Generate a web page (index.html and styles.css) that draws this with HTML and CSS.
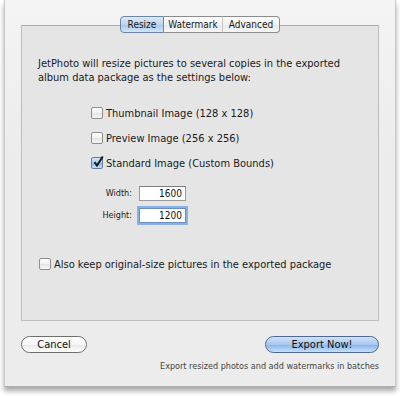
FILE: index.html
```html
<!DOCTYPE html>
<html>
<head>
<meta charset="utf-8">
<link rel="stylesheet" href="styles.css">
</head>
<body>
<div class="window">
  <div class="tabs">
    <span class="seg sel">Resize</span><span class="seg">Watermark</span><span class="seg last">Advanced</span>
  </div>
  <div class="box">
    <p class="intro">JetPhoto will resize pictures to several copies in the exported<br>album data package as the settings below:</p>
    <div class="options">
      <label class="check"><span class="cb"></span>Thumbnail Image (128 x 128)</label>
      <label class="check"><span class="cb"></span>Preview Image (256 x 256)</label>
      <label class="check"><span class="cb on"><svg viewBox="0 0 14 14" width="14" height="14"><path d="M3.5 7.2 L6 10.5 L11.8 1.5" fill="none" stroke="#1a1a1a" stroke-width="2"/></svg></span>Standard Image (Custom Bounds)</label>
      <div class="fields">
        <div class="frow"><span class="flabel">Width:</span><span class="field">1600</span></div>
        <div class="frow"><span class="flabel">Height:</span><span class="field focus">1200</span></div>
      </div>
    </div>
    <label class="check keep"><span class="cb"></span>Also keep original-size pictures in the exported package</label>
  </div>
  <div class="buttons">
    <span class="btn cancel">Cancel</span>
    <span class="btn default">Export Now!</span>
  </div>
  <p class="caption">Export resized photos and add watermarks in batches</p>
</div>
</body>
</html>
```
FILE: styles.css
```css
* { box-sizing: border-box; }
html, body { margin: 0; padding: 0; background: #fff; }
body {
  font-family: "DejaVu Sans Condensed", "DejaVu Sans", "Liberation Sans", sans-serif;
  font-size: 11px;
  color: #111;
  width: 400px;
  height: 396px;
  overflow: hidden;
}
.window {
  margin: 0 4px;
  height: 387px;
  background: linear-gradient(#f4f4f4, #ececec 40%, #ececec);
  border-left: 1px solid #c9c9c9;
  border-right: 1px solid #c9c9c9;
  border-bottom: 1px solid #b0b0b0;
  box-shadow: 0 4px 5px rgba(0,0,0,0.35);
  padding: 16px 16px 0 16px;
}
.tabs {
  display: flex;
  justify-content: center;
  position: relative;
  z-index: 1;
  height: 17px;
  margin-bottom: -8px;
}
.seg {
  display: inline-flex;
  align-items: center;
  justify-content: center;
  height: 17px;
  font-size: 10px;
  color: #1a1a1a;
  background: linear-gradient(#ffffff, #f3f3f3 50%, #e9e9e9 51%, #f6f6f6);
  border: 1px solid #8c8c8c;
  border-left: none;
  padding: 0;
}
.seg:first-child { border-radius: 4px 0 0 4px; width: 44px; border-left: 1px solid #7a8aa3; }
.seg:nth-child(2) { width: 59px; border-right-color: #c4c4c4; }
.seg.last { border-radius: 0 4px 4px 0; width: 57px; }
.seg.sel {
  background: linear-gradient(#dbe9f8, #bcd5f0 50%, #a9c8ec 51%, #d2e5fb);
  border-color: #6d86a8;
}
.box {
  background: #e5e5e5;
  border: 1px solid #bdbdbd;
  border-top-color: #a9a9a9;
  height: 296px;
  padding: 31px 16px 0 16px;
}
.intro {
  margin: 0;
  line-height: 14px;
  font-size: 11px;
  color: #1a1a1a;
}
.options {
  margin: 21px 0 0 53px;
  display: flex;
  flex-direction: column;
  gap: 11px;
}
.check {
  display: flex;
  align-items: center;
  gap: 3px;
  height: 14px;
  color: #1a1a1a;
}
.cb {
  width: 12px;
  height: 12px;
  border: 1px solid #8e8e8e;
  border-radius: 2px;
  background: linear-gradient(#ffffff, #f0f0f0 50%, #e4e4e4 51%, #f7f7f7);
  position: relative;
  flex: none;
}
.cb.on {
  background: linear-gradient(#d3e4f7, #a8c8ee 50%, #8fb6e8 51%, #c3dcf7);
  border-color: #5f7ea6;
}
.cb svg { position: absolute; left: -1px; top: -3px; }
.fields {
  margin: 4px 0 0 0;
  display: flex;
  flex-direction: column;
  gap: 6px;
}
.frow {
  display: flex;
  align-items: center;
  height: 16px;
}
.flabel {
  width: 41px;
  text-align: right;
  font-size: 9px;
  color: #222;
  margin-right: 7px;
}
.field {
  width: 47px;
  height: 15px;
  background: #fff;
  border: 1px solid #9a9a9a;
  border-top-color: #7c7c7c;
  font-size: 10px;
  text-align: right;
  padding: 1px 3px 0 0;
  line-height: 12px;
}
.field.focus {
  box-shadow: 0 0 0 2px #88b2e4;
  border-color: #6b8fc3;
}
.keep {
  margin: 34px 0 0 1px;
}
.buttons {
  display: flex;
  justify-content: space-between;
  margin-top: 15px;
}
.btn {
  display: inline-flex;
  align-items: center;
  justify-content: center;
  height: 17px;
  border-radius: 9px;
  border: 1px solid #6e6e6e;
  font-size: 11px;
  color: #111;
  background: linear-gradient(#ffffff, #f6f6f6 50%, #e8e8e8 51%, #ffffff);
}
.cancel { width: 66px; }
.default {
  width: 114px;
  border-color: #50688f;
  background: linear-gradient(#cfe2f8, #a7c8f0 50%, #86b3ea 51%, #c6e0fb);
}
.caption {
  margin: 8px 0 0 0;
  text-align: right;
  font-size: 9px;
  color: #444;
}
```
